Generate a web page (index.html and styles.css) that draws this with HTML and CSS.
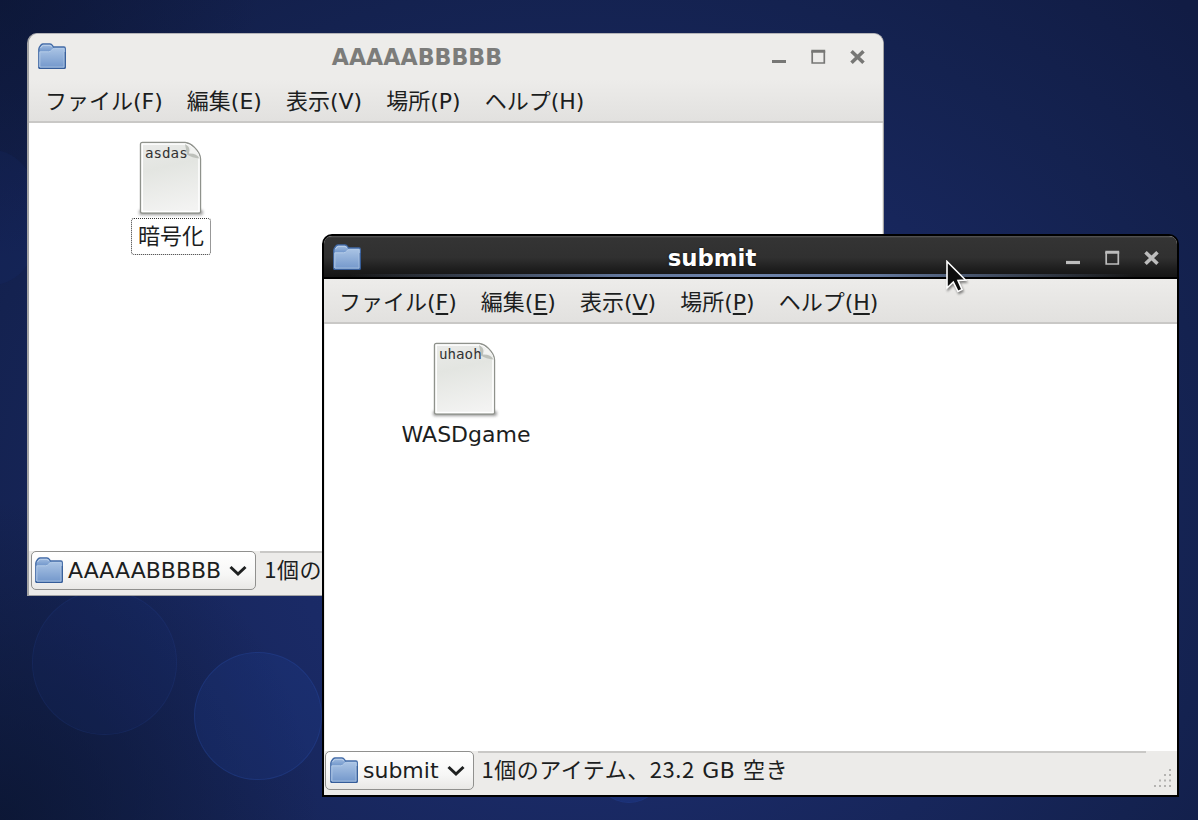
FILE: index.html
```html
<!DOCTYPE html>
<html lang="ja">
<head>
<meta charset="utf-8">
<title>submit</title>
<link rel="stylesheet" href="styles.css">
</head>
<body>
<svg class="defs" width="0" height="0" aria-hidden="true">
  <defs>
    <linearGradient id="fold" x1="0" y1="0" x2="0" y2="1"><stop offset="0" stop-color="#a9c3e4"/><stop offset="1" stop-color="#7599cc"/></linearGradient>
    <linearGradient id="tab" x1="0" y1="0" x2="0" y2="1"><stop offset="0" stop-color="#a4bfe2"/><stop offset=".3" stop-color="#7398cc"/><stop offset="1" stop-color="#6c92c8"/></linearGradient>
    <linearGradient id="paper" x1=".3" y1="0" x2=".5" y2="1"><stop offset="0" stop-color="#e9eae8"/><stop offset=".35" stop-color="#e3e5e1"/><stop offset="1" stop-color="#f3f3f2"/></linearGradient>
    <linearGradient id="curl" x1="0" y1="1" x2="1" y2="0"><stop offset="0" stop-color="#fff"/><stop offset="1" stop-color="#dfe0dd"/></linearGradient>
    <filter id="soft" x="-30%" y="-200%" width="160%" height="500%"><feGaussianBlur stdDeviation="1.5"/></filter>
    <symbol id="folder" viewBox="0 0 28 26">
      <path d="M.8 6 Q1 4.500 3 2 Q4 1 5 1 H12 Q13.500 1 14.500 2.500 L15.500 4 H26 Q27.300 4 27.300 5.500 V24 Q27.300 25.300 26 25.300 H2 Q.8 25.300 .8 24 Z" fill="url(#tab)" stroke="#426aa6" stroke-width="1.300"/>
      <path d="M2.500 5 Q4 2.300 5.500 2.300 H12 Q13 2.300 13.500 4" fill="none" stroke="#bdd1ea" stroke-width="1"/>
      <path d="M1.800 8.800 H10.500 Q12.500 8.800 13.300 7.500 Q14.500 5.400 16.500 5.400 H26.200 V24.200 H1.800 Z" fill="url(#fold)" stroke="#b5cce8" stroke-width="1"/>
      <path d="M1 24 V25.300 H27.200 V9" fill="none" stroke="#345a96" stroke-width="1"/>
    </symbol>
    <symbol id="doc" viewBox="0 0 70 78">
      <rect x="3" y="69" width="64" height="5" rx="2" fill="#555" opacity=".6" filter="url(#soft)"/>
      <path d="M6.500 1.500 H49 Q54 2 58.500 6.500 Q64.500 12.500 64.500 18 V70 Q64.500 72 62.500 72 H6.500 Q4.500 72 4.500 70 V3.500 Q4.500 1.500 6.500 1.500 Z" fill="url(#paper)" stroke="#8f928c" stroke-width="1.400"/>
      <path d="M6.200 3.100 H49 Q54 4 57.500 7.500 Q63 13 63 18 V70.500 H6.200 Z" fill="none" stroke="#fff" stroke-width="1.500"/>
      <path d="M49 2.600 Q55 5 53 13 Q60 12.500 64 18 Q62.500 8 49 2.600 Z" fill="url(#curl)"/>
      <path d="M49 3 Q55 6 53 12.500 Q60.500 12 63.500 17.500 Q56 17 51 13.500" fill="#bdc0ba"/>
      <path d="M50.500 3.500 Q57 6 54.500 11.500 Q60.500 11 63 15 Q60.500 7.500 50.500 3.500 Z" fill="#f2f3f1"/>
    </symbol>
    <symbol id="chevron" viewBox="0 0 18 12"><path d="M1.500 2 L9 9 L16.500 2" fill="none" stroke="#1e2020" stroke-width="3"/></symbol>
    <symbol id="controls" viewBox="0 0 94 16">
      <path d="M0 12.500 H14" stroke="currentColor" stroke-width="3.200"/>
      <path d="M40.200 2 V14 H52.300 V2" fill="none" stroke="currentColor" stroke-width="1.700"/>
      <path d="M39.300 2.300 H53.200" stroke="currentColor" stroke-width="3"/>
      <path d="M79.500 2.300 L91.500 13.700 M91.500 2.300 L79.500 13.700" stroke="currentColor" stroke-width="3.600"/>
    </symbol>
  </defs>
</svg>
<main class="desktop">
  <i class="bubble b1"></i><i class="bubble b2"></i><i class="bubble b3"></i><i class="bubble b4"></i>

  <section class="window back">
    <header class="titlebar">
      <svg class="folder"><use href="#folder"/></svg>
      <h1 class="title">AAAAABBBBB</h1>
      <svg class="controls"><use href="#controls"/></svg>
    </header>
    <nav class="menubar">
      <span>ファイル(<u>F</u>)</span><span>編集(<u>E</u>)</span><span>表示(<u>V</u>)</span><span>場所(<u>P</u>)</span><span>ヘルプ(<u>H</u>)</span>
    </nav>
    <div class="content">
      <div class="file">
        <div class="thumb"><svg class="doc"><use href="#doc"/></svg><span class="preview">asdas</span></div>
        <span class="label focused">暗号化</span>
      </div>
    </div>
    <footer class="statusbar">
      <div class="location"><svg class="folder"><use href="#folder"/></svg><span>AAAAABBBBB</span><svg class="chevron"><use href="#chevron"/></svg></div>
      <div class="status">1個の</div>
    </footer>
  </section>

  <section class="window front">
    <header class="titlebar">
      <svg class="folder"><use href="#folder"/></svg>
      <h1 class="title">submit</h1>
      <svg class="controls"><use href="#controls"/></svg>
    </header>
    <nav class="menubar">
      <span>ファイル(<u>F</u>)</span><span>編集(<u>E</u>)</span><span>表示(<u>V</u>)</span><span>場所(<u>P</u>)</span><span>ヘルプ(<u>H</u>)</span>
    </nav>
    <div class="content">
      <div class="file">
        <div class="thumb"><svg class="doc"><use href="#doc"/></svg><span class="preview">uhaoh</span></div>
        <span class="label">WASDgame</span>
      </div>
    </div>
    <footer class="statusbar">
      <div class="location"><svg class="folder"><use href="#folder"/></svg><span>submit</span><svg class="chevron"><use href="#chevron"/></svg></div>
      <div class="status">1個のアイテム、23.2<span class="latin"> GB </span>空き</div>
      <svg class="grip" viewBox="0 0 19 19" fill="#b4b3b1"><path d="M15 0h2v2h-2zM10 5h2v2h-2zM15 5h2v2h-2zM5 10.500h2v2H5zM10 10.500h2v2h-2zM15 10.500h2v2h-2zM0 16h2v2H0zM5 16h2v2H5zM10 16h2v2h-2zM15 16h2v2h-2z"/></svg>
    </footer>
  </section>

  <svg class="cursor" viewBox="0 0 22 34"><path d="M1 1.500 V28 L7.300 22 L12 31.500 L16 29.500 L12 20.500 L19.500 20 Z" fill="#0c0c0c" stroke="#fff" stroke-width="1.600"/></svg>
</main>
</body>
</html>
```
FILE: styles.css
```css
* { box-sizing: border-box; }
body { margin: 0; font: 22px/30px "DejaVu Sans", "Noto Sans CJK JP", sans-serif; color: #1c1e1e; }
svg { display: block; flex: none; }
.defs { position: absolute; }
.desktop {
  position: relative; width: 1198px; height: 820px; overflow: hidden;
  background:
    radial-gradient(circle at 0 0, rgba(10,20,48,.55), transparent 260px),
    radial-gradient(circle at 0 820px, rgba(10,20,46,.75), transparent 320px),
    radial-gradient(ellipse 850px 720px at 590px 520px, #1c2f70 0, #1a2a66 35%, #142250 75%, #111c44 100%);
}
.bubble { position: absolute; border-radius: 50%; background: rgba(34,62,150,.1); border: 1px solid rgba(50,80,170,.12); }
.b1 { left: 32px; top: 590px; width: 145px; height: 145px; }
.b2 { left: 194px; top: 652px; width: 128px; height: 128px; background: rgba(30,64,150,.22); border-color: rgba(45,85,180,.25); }
.b3 { left: -55px; top: 150px; width: 96px; height: 135px; border-color: transparent; }
.b4 { left: 594px; top: 733px; width: 70px; height: 70px; background: rgba(32,66,160,.3); }

.window { position: absolute; width: 857px; height: 563px; display: flex; flex-direction: column; border-radius: 10px 10px 0 0; overflow: hidden; background: #ecebe9; }
.back { left: 27px; top: 33px; border: 1px solid #a3a3a4; border-width: 1px 1px 1px 2px; border-top-color: #b4b4b8; }
.front { left: 322px; top: 234px; border: 2px solid #000; }
.titlebar { display: flex; align-items: center; height: 45px; flex: none; padding: 0 17px 0 9px; }
.back .titlebar { background: #edecea; }
.front .titlebar {
  height: 43px; padding-top: 1px;
  background:
    linear-gradient(#000, #000) 0 100% / 100% 2px no-repeat,
    linear-gradient(90deg, transparent 3%, #63789d 35%, #6d83ab 50%, #63789d 65%, transparent 95%) 0 38px / 100% 3px no-repeat,
    linear-gradient(#5a5a5a 0, #343434 2px, #303030 50%, #1d1d1d 78%, #141414 100%);
}
.folder { width: 28px; height: 26px; }
.titlebar .folder { margin-top: -2px; }
.title { flex: 1; margin: 0 4px 0 0; font-size: 22.200px; line-height: 30px; text-align: center; }
.back .title { color: #7c7c7a; }
.front .title { color: #fff; text-shadow: 0 0 2px #000; margin-right: 6px; font-size: 22.800px; }
.front .controls { margin-left: -3px; }
.controls { width: 94px; height: 16px; color: #bdbdbd; }
.back .controls { color: #777775; }
.menubar { display: flex; gap: 24px; align-items: center; height: 44px; flex: none; padding: 3px 16px 0; white-space: nowrap; background: linear-gradient(#edecea, #e2e1df); border-bottom: 2px solid #c9c8c6; }
.front .menubar { height: 45px; padding: 4px 15px 0; }
.menubar u { text-decoration: none; }
.front .menubar u { text-decoration: underline; text-decoration-thickness: 1.500px; text-underline-offset: 3px; }
.content { flex: 1; background: #fff; margin: 0 1px 0 0; padding: 18px 0 0 68px; }
.front .content { margin: 0 0 0 1px; padding: 18px 0 0 66px; }
.file { display: flex; flex-direction: column; align-items: center; width: 148px; }
.thumb { position: relative; width: 70px; height: 77px; }
.front .thumb { height: 75px; }
.doc { width: 70px; height: 78px; }
.preview { position: absolute; left: 9px; top: 2px; font: 14.200px/20px "DejaVu Sans Mono", monospace; color: #333; }
.label { padding: 3px 6px 2px; }
.front .label { margin-left: 2px; }
.focused { border: 1.500px dotted #333; border-radius: 3px; }
.statusbar { display: flex; align-items: flex-start; height: 44px; flex: none; background: #ecebe9; }
.location { display: flex; align-items: center; height: 39px; margin-left: 2px; padding: 0 8px 0 3px; border: 1.500px solid #90908e; border-radius: 5px; background: linear-gradient(#fff, #f7f7f6 60%, #e9e8e6); }
.front .location { margin-left: 1px; padding: 0 8px 0 4px; }
.location .folder { margin-top: -2px; }
.location span { margin: 0 8px 0 5px; }
.chevron { width: 18px; height: 12px; }
.status { height: 43px; margin: 0 31px 0 4px; border-top: 2px solid #c9c8c6; font-family: "Noto Sans CJK JP", sans-serif; letter-spacing: .53px; white-space: nowrap; flex: 1; padding: 0 0 0 4px; }
.latin { font-family: "DejaVu Sans", sans-serif; }
.grip { position: absolute; right: 4px; bottom: 7px; width: 19px; height: 19px; }
.cursor { position: absolute; left: 946px; top: 260px; width: 22px; height: 34px; filter: drop-shadow(1px 2px 1px rgba(0,0,0,.45)); }
```
